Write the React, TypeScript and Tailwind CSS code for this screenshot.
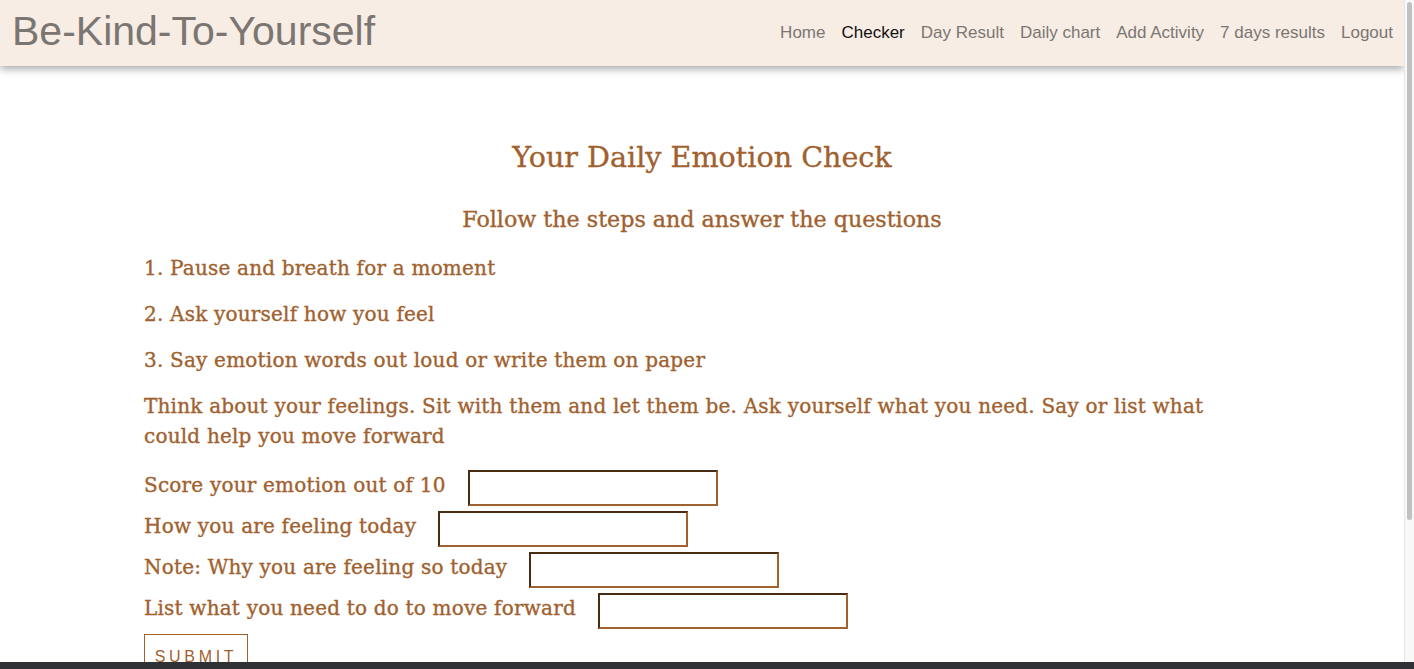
import React from 'react'

const navLinks = ['Home', 'Checker', 'Day Result', 'Daily chart', 'Add Activity', '7 days results', 'Logout']

const questions = [
  'Score your emotion out of 10',
  'How you are feeling today',
  'Note: Why you are feeling so today',
  'List what you need to do to move forward'
]

const Navbar = () => {
  return (
    <nav className="relative z-10 flex h-[66px] items-center justify-between bg-[#f7ede5] pl-3 pr-[3px] shadow-[0_3px_8px_rgba(0,0,0,0.35)]">
      <a className="text-[41px] leading-none text-[#7b7672] font-['Liberation_Sans',sans-serif] -mt-1">
        Be-Kind-To-Yourself
      </a>
      <ul className="flex items-center font-['Liberation_Sans',sans-serif] text-[17px]">
        {navLinks.map(link => (
          <li key={link}>
            <a className={link === 'Checker' ? 'px-2 text-[#111]' : 'px-2 text-[#7b7672]'}>{link}</a>
          </li>
        ))}
      </ul>
    </nav>
  )
}

const Checker = () => {
  return (
    <div className="mx-auto max-w-[1140px] px-3 pt-[74px] text-[#a0612e] font-['DejaVu_Serif',serif] [-webkit-text-stroke:0.35px]">
      <h3 className="text-center text-[28.6px] leading-[34px]">Your Daily Emotion Check</h3>
      <h5 className="mt-[30px] text-center text-[22.2px] leading-[30px]">Follow the steps and answer the questions</h5>
      <div className="tracking-[0.2px]">
        <p className="mt-[19px] text-[20px] leading-[30px]">1. Pause and breath for a moment</p>
        <p className="mt-4 text-[20px] leading-[30px]">2. Ask yourself how you feel</p>
        <p className="mt-4 text-[20px] leading-[30px]">3. Say emotion words out loud or write them on paper</p>
        <p className="mt-4 text-[20px] leading-[30px]">
          Think about your feelings. Sit with them and let them be. Ask yourself what you need. Say or list what could help you move forward
        </p>
        <form className="mt-[19px] flex flex-col gap-[5px]">
          {questions.map(q => (
            <div key={q} className="flex items-center gap-[22px]">
              <label className="-mt-[6px] text-[20px]">{q}</label>
              <input
                type="text"
                className="h-[36px] w-[250px] border-2 border-t-[#4a2c12] border-l-[#4a2c12] border-b-[#a0612e] border-r-[#a0612e] bg-white outline-none"
              />
            </div>
          ))}
          <div>
            <button
              type="button"
              className="h-[44px] w-[104px] border border-[#a0612e] pt-[2px] text-[16px] tracking-[3.7px] text-[#a0612e] font-['Liberation_Sans',sans-serif] [-webkit-text-stroke:0px]"
            >
              SUBMIT
            </button>
          </div>
        </form>
      </div>
    </div>
  )
}

export default function App() {
  return (
    <div className="flex h-[669px] w-full flex-col overflow-hidden bg-white">
      <div className="flex min-h-0 flex-1">
        <div className="min-w-0 flex-1 overflow-hidden">
          <Navbar />
          <Checker />
        </div>
        <div className="w-[10px] shrink-0 border-l border-[#e6e6e6] bg-[#f8f8f8] px-[2px] pt-[2px]">
          <div className="h-[518px] rounded-full bg-[#c1c1c1]" />
        </div>
      </div>
      <div className="h-[7px] shrink-0 bg-[#303134]" />
    </div>
  )
}
